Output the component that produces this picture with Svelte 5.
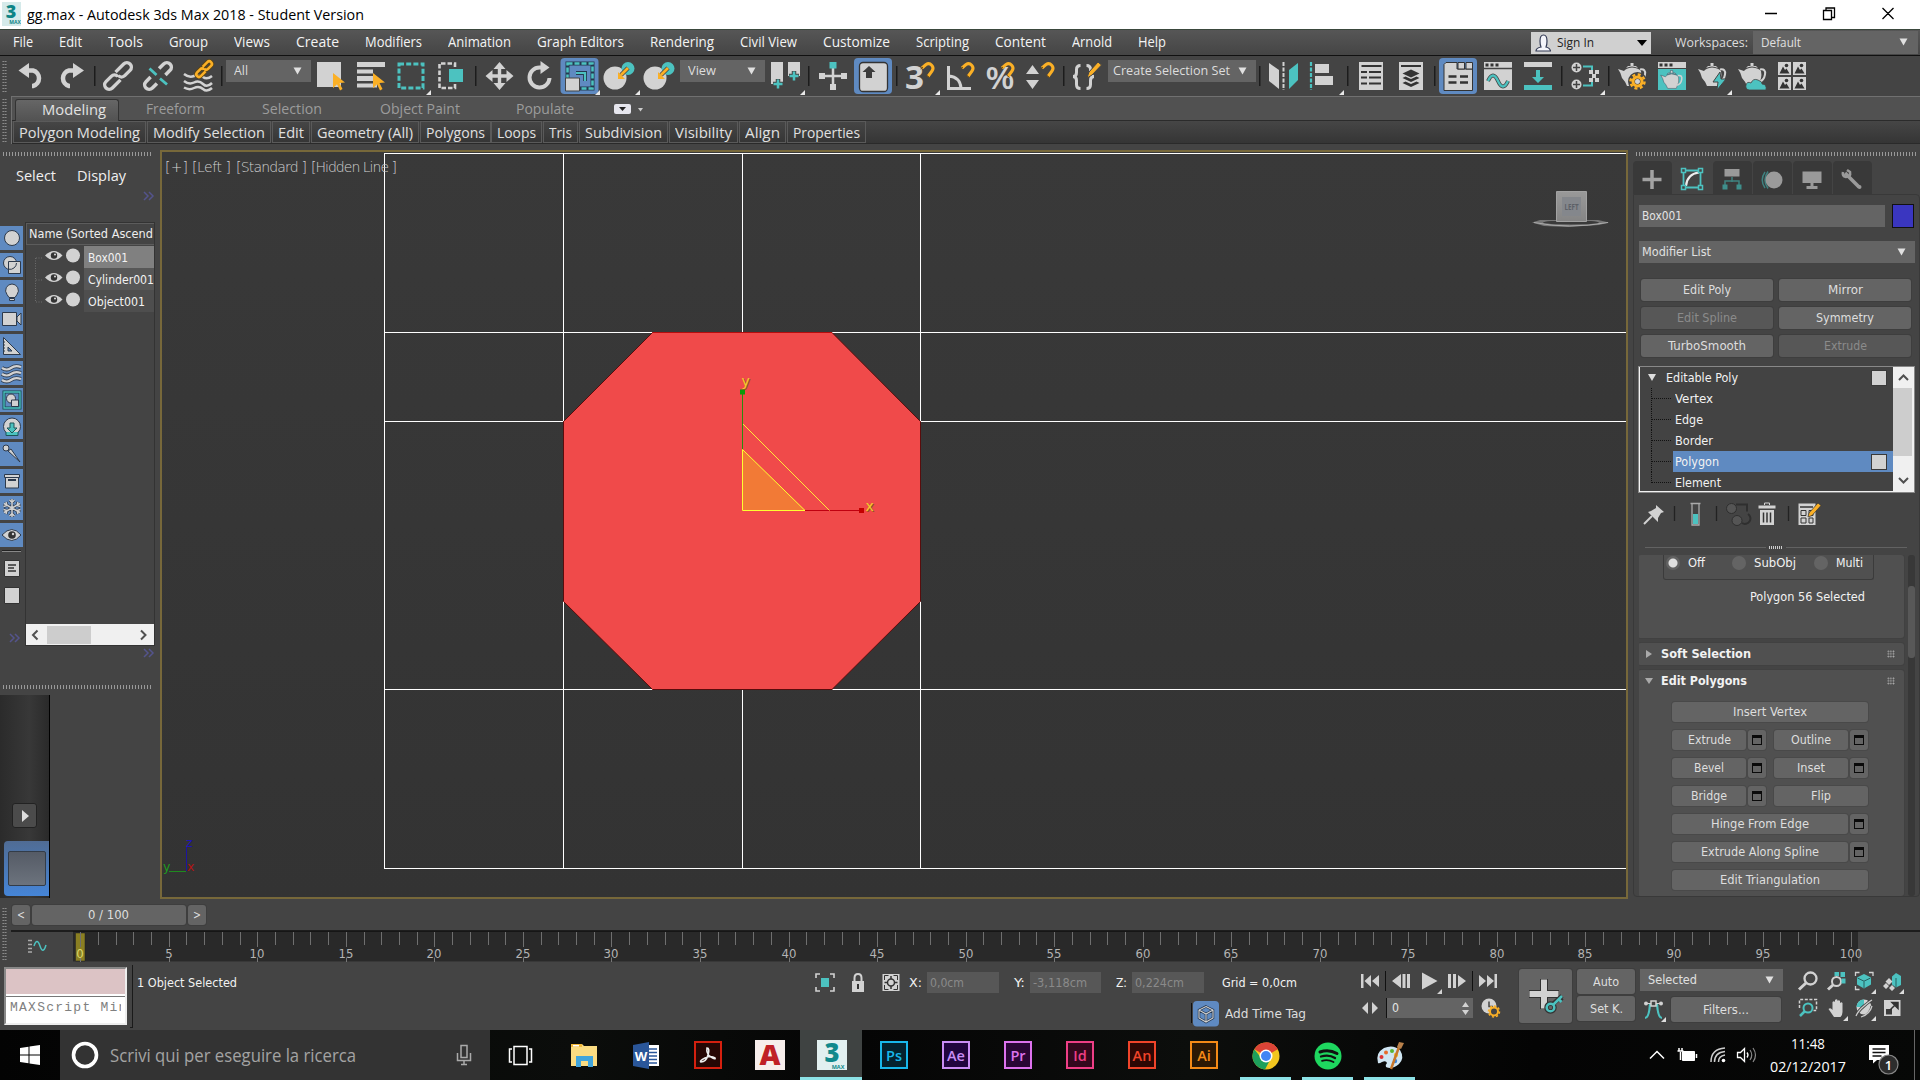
<script>
  // Sizes a label to an exact pixel width by scaling it horizontally.
  function fit(node, w) {
    if (!w) return;
    const natural = node.getBoundingClientRect().width;
    node.style.width = w + 'px';
    node.style.transform = `scaleX(${w / natural})`;
  }

  const L = '#d2d2d2', T = '#4cc2c0', O = '#fbb026';
  const menus = [['File', 20], ['Edit', 23], ['Tools', 35], ['Group', 39], ['Views', 36], ['Create', 43], ['Modifiers', 57], ['Animation', 63], ['Graph Editors', 87], ['Rendering', 64], ['Civil View', 57], ['Customize', 67], ['Scripting', 53], ['Content', 51], ['Arnold', 40], ['Help', 28]];
  const ribbon = [['Polygon Modeling', 121], ['Modify Selection', 112], ['Edit', 26], ['Geometry (All)', 96], ['Polygons', 59], ['Loops', 39], ['Tris', 23], ['Subdivision', 77], ['Visibility', 57], ['Align', 35], ['Properties', 67]];

  const corner = `<path d="M40 34v5h-5z" fill="#e8e8e8"/>`;
  const chain = (s, w) => `<g fill="none" stroke="${s}" stroke-width="${w}" transform="rotate(-45 20 20)"><path d="M19 24.500H7.500a4.500 4.500 0 0 1 0-9H15a4.500 4.500 0 0 1 4.500 4.500M21 15.500h11.500a4.500 4.500 0 0 1 0 9H25a4.500 4.500 0 0 1-4.500-4.500"/></g>`;
  const magnet = `<path d="M22 12l4-3.500a4.500 4.500 0 0 1 6 6.500l-4 5.500" fill="none" stroke="${O}" stroke-width="3"/><path d="M20.500 13l2.500-2M26.500 19l3 2.500" stroke="#6b4a12" stroke-width="1"/>`;
  const pot = (c = L) => `<path d="M6 13l6 2q2-3 8-3.500q7 .5 9 3.500q1.500 7-3 15H15q-2-5-5-8q-1-5-4-9z" fill="${c}"/><path d="M14 12q6-3 12 0l-2-2h-2.500V7h-3v3H16z" fill="${c}"/><path d="M28 13.500q6-1 5 5t-6 7.500" fill="none" stroke="${c}" stroke-width="2"/>`;
  const cursor = `<path d="M22 17l12 9.500-5.500.5 3 6-2.500 1.500-3-6.200-4 4z" fill="${O}"/>`;
  const plusT = (x, y) => `<path d="M${x - 5} ${y}h10M${x} ${y - 5}v10" stroke="#444" stroke-width="4.500"/><path d="M${x - 4.5} ${y}h9M${x} ${y - 4.5}v9" stroke="${T}" stroke-width="2.500"/>`;
  const place = `<circle cx="15" cy="22" r="11.500" fill="${L}"/><circle cx="28" cy="12.500" r="6.500" fill="${T}"/><path d="M28 12l-7 7" stroke="#444" stroke-width="4.500"/><path d="M28 12l-7 7" stroke="${O}" stroke-width="2.800"/><path d="M18 16v7h7z" fill="${O}"/>`;
  const photo = (x, y) => `<path d="M${x} ${y}h13v13h-13z" fill="${L}"/><path d="M${x + 1.5} ${y + 11.5}l3.500-7 2 3.500 1.500-1.500 3 5z" fill="#333"/><circle cx="${x + 8.5}" cy="${y + 3.5}" r="1.800" fill="#333"/>`;

  const tb = {
    undo: `<path d="M15.500 14.500H22a8 8 0 0 1 0 15.500h-1" fill="none" stroke="${L}" stroke-width="4.500"/><path d="M7.500 14.500L18 7v15z" fill="${L}"/>`,
    redo: `<path d="M24.500 14.500H18a8 8 0 0 0 0 15.500h1" fill="none" stroke="${L}" stroke-width="4.500"/><path d="M33 14.500L22 7v15z" fill="${L}"/>`,
    link: chain(L, 3.4),
    unlink: `<g fill="none" stroke="${L}" stroke-width="3.500" transform="rotate(-45 20 20)"><path d="M14 15.500H7.500a4.500 4.500 0 0 0 0 9H14M26 15.500h6.500a4.500 4.500 0 0 1 0 9H26"/></g><path d="M11.500 12.500l7 6.500M22 22.500l7 6" stroke="${T}" stroke-width="2.800"/>`,
    bind: `<g fill="none" stroke="${L}" stroke-width="2.500"><path d="M6 18q5 4 10 2t9 1 9-1M6 25q5 4 10 1.500t9 1.500 9-1M6 31.500q5 3 10 .5t9 1 9-1"/></g><g transform="translate(14.500 1.500) scale(.58)">${chain('#5a4416', 7.500)}${chain(O, 4.500)}</g>`,
    select: `<path d="M6 6h24v25H6z" fill="${L}"/>${cursor}`,
    byname: `<path d="M6 6h28v5H6zM6 13.500h16v4H6zM6 20h16v5H6zM6 27.500h20v4H6z" fill="${L}"/>${cursor}`,
    region: `<rect x="8" y="8" width="24" height="24" fill="none" stroke="${T}" stroke-width="3" stroke-dasharray="5 2.200"/>${corner}`,
    cross: `<path d="M24 11V7.500H8.500v24.500H24v-4" fill="none" stroke="${L}" stroke-width="2.600" stroke-dasharray="4.500 2"/><path d="M18 13h14v13H18z" fill="${T}"/>`,
    move: `<path d="M19.500 6l6 7h-4.300v5.300h5.300V14l7 6-7 6v-4.300h-5.300V27h4.300l-6 7-6-7h4.300v-5.300h-5.300V26l-7-6 7-6v4.300h5.300V13h-4.300z" fill="${L}"/>`,
    rotate: `<path d="M29.500 22a10 10 0 1 1-10-10.500h3" fill="none" stroke="${L}" stroke-width="4"/><path d="M20.500 5l9 6.500-9 6.500z" fill="${L}"/>`,
    scale: `<rect x=".5" y="2" width="38" height="36" rx="4" fill="#5f8ac1"/><rect x="7.500" y="7.500" width="25" height="25" fill="none" stroke="#253a50" stroke-width="4"/><rect x="7.500" y="7.500" width="25" height="25" fill="none" stroke="${T}" stroke-width="2.500" stroke-dasharray="5 2"/><path d="M16 17h9v8" fill="none" stroke="#253a50" stroke-width="4"/><path d="M16 17h9v8" fill="none" stroke="${T}" stroke-width="2.200"/><path d="M5.500 22h14v13h-14z" fill="${L}" stroke="#444"/>${corner}`,
    place: place + corner,
    place2: place,
    pivot: `<path d="M6 6h12v22H6zM23 6h12v14H23z" fill="${L}"/>${plusT(13, 28)}${plusT(29, 20)}${corner}`,
    manip: `<path d="M9 20h22M20 12v19" stroke="${L}" stroke-width="2.500"/><path d="M6 17h6v6H6zM28 17h6v6h-6zM17 28h6v6h-6z" fill="${L}"/><path d="M16.500 6h7v6.500h-7z" fill="${T}"/>`,
    keyb: `<rect x="1" y="2" width="38" height="36" rx="4" fill="#5f8ac1"/><rect x="6.500" y="6.500" width="28" height="29" rx="3.500" fill="${L}" stroke="#333" stroke-width="1.300"/><path d="M16 10l6.500 6H19v6h-6v-6H9.500z" fill="#3c3c3c"/>`,
    snap3: `<text x="5" y="33" font-family="Open Sans, sans-serif" font-weight="700" font-size="32" fill="${L}" textLength="19" lengthAdjust="spacingAndGlyphs">3</text>${magnet}${corner}`,
    angle: `<path d="M8.500 10v22.500H31M9 20q11 1 12 12" fill="none" stroke="${L}" stroke-width="3"/>${magnet}`,
    pct: `<text x="5.500" y="33" font-family="Open Sans, sans-serif" font-weight="600" font-size="31" fill="${L}" textLength="29" lengthAdjust="spacingAndGlyphs">%</text>${magnet}`,
    spin: `<path d="M12.500 9l6.500 9H6zM12.500 33L6 24h13z" fill="${L}"/>${magnet}`,
    named: `<g fill="none" stroke="${L}" stroke-width="3"><path d="M13.500 9.500q-4 0-4 4v3q0 4-3.500 4 3.500 0 3.500 4v4q0 4 4 4M19.500 9.500q4 0 4 4v3q0 4 3.500 4-3.500 0-3.500 4v4q0 4-4 4"/></g><path d="M20 22l2-6 9-10 3.500 3-9.500 10z" fill="${O}" stroke="#444"/>`,
    mirror: `<path d="M5 7l10 7v19L5 25z" fill="${L}"/><path d="M19.500 6v28" stroke="${L}" stroke-width="2" stroke-dasharray="4 1.500"/><path d="M25 14l9-7v17l-9 9z" fill="${T}"/>`,
    align: `<path d="M7 6v28" stroke="${T}" stroke-width="2.200" stroke-dasharray="4 1.500"/><path d="M11 8h14v9H11zM11 20h18v9H11z" fill="${L}"/>${corner}`,
    list: `<path d="M8 6h24v28H8z" fill="${L}"/><path d="M10.500 10h20M10 16h6M18 16h12M10 21.500h6M18 21.500h12M10 27.500h6M18 27.500h12" stroke="#333" stroke-width="2.200"/>`,
    layers: `<path d="M8 6h24v28H8z" fill="${L}"/><path d="M10 10h20" stroke="#333" stroke-width="2"/><path d="M20 13.500l8.500 4-8.500 4-8.500-4zM11.500 22l3-1.500 5.500 2.500 5.500-2.500 3 1.500-8.500 4zM11.500 27l3-1.500 5.500 2.500 5.500-2.500 3 1.500-8.500 4z" fill="#333"/>`,
    toggle: `<rect x="1" y="2" width="38" height="36" rx="4" fill="#5f8ac1"/><path d="M8 6.500h11v6.500h15.500v21.500H6v-26z" fill="${L}" stroke="#333"/><path d="M20 6.500h6.500V13H20zM28 6.500h6.500V13H28z" fill="${L}" stroke="#333"/><path d="M10.500 20.500h8M22 20.500h8M10.500 26.500h8M22 26.500h8" stroke="#333" stroke-width="2.500"/>`,
    curve: `<path d="M6 6h28v28H6z" fill="${L}"/><path d="M7.500 7.500h3v3h-3zM12.500 7.500h3v3h-3zM17.500 7.500h3v3h-3z" fill="#333"/><path d="M6 12.500h28" stroke="#444" stroke-width="1.500"/><path d="M10 25q5-11 10 0t10 0" fill="none" stroke="#444" stroke-width="4"/><path d="M10 25q5-11 10 0t10 0" fill="none" stroke="${T}" stroke-width="2.300"/>`,
    dope: `<path d="M6 6h28v5H6z" fill="${L}"/><path d="M6 29h28v5H6zM18 14h4v7h4l-6 6-6-6h4z" fill="${T}"/>`,
    schem: `<circle cx="11.500" cy="11.500" r="5" fill="${L}"/><circle cx="11.500" cy="28.500" r="5" fill="${L}"/><path d="M11.500 8v7M8 11.500h7M11.500 25v7M8 28.500h7" stroke="#444" stroke-width="1.500"/><path d="M18 10.500h9V15M18 29.500h9V25" fill="none" stroke="${T}" stroke-width="2"/><path d="M24 14h4v4h-4zM30 14h4v4h-4zM27 18h4v4h-4zM24 22h4v4h-4zM30 22h4v4h-4z" fill="${L}"/>${corner}`,
    potGear: `${pot()}<circle cx="25.500" cy="25.500" r="6" fill="none" stroke="#444" stroke-width="7"/><circle cx="25.500" cy="25.500" r="4.500" fill="none" stroke="${O}" stroke-width="3"/><circle cx="25.500" cy="25.500" r="7" fill="none" stroke="${O}" stroke-width="2.500" stroke-dasharray="3 2.500"/>`,
    potWin: `<path d="M6 6h28v6H6z" fill="${L}"/><path d="M7.500 7.500h3v3h-3zM12.500 7.500h3v3h-3zM17.500 7.500h3v3h-3z" fill="#333"/><path d="M6 13h28v21H6z" fill="${T}"/><g transform="translate(4 9) scale(.78)" stroke="#345" stroke-width=".6">${pot()}</g>`,
    potBolt: `${pot()}<path d="M28 16l-7 10h5l-1 8 9-11h-5z" fill="${T}" stroke="#444"/>${corner}`,
    potCloud: `${pot()}<path d="M17 34q-4-1-3-5t5-2q2-5 7-3t4 4q5 0 4 6z" fill="${T}" stroke="#444" stroke-width=".8"/>`,
    gallery: photo(6, 6) + photo(21, 6) + photo(6, 21) + photo(21, 21)
  };

  const toolbar = ['undo', 'redo', 7, 'link', 'unlink', 'bind', 7, { w: 85, t: 'All', tw: 14, m: 1 }, 'select', 'byname', 'region', 'cross', 9, 'move', 'rotate', 'scale', 'place', 'place2', { w: 85, t: 'View', tw: 28, m: 0 }, 'pivot', 8, 'manip', 'keyb', 7, 'snap3', 'angle', 'pct', 'spin', 7, 'named', { w: 148, t: 'Create Selection Set', tw: 117, m: 1, tight: true }, 8, 'mirror', 'align', 7, 'list', 'layers', 7, 'toggle', 'curve', 'dope', 7, 'schem', 7, 'potGear', 'potWin', 'potBolt', 'potCloud', 'gallery'];

  const S = `fill="${L}" stroke="#2d3a4c" stroke-width="1"`;
  const flake = `M12 3v18M4 7.500l16 9M4 16.500l16-9M9.500 4l2.500 2.500L14.500 4M9.500 20l2.500-2.500 2.500 2.500M3.500 10.500l3.500-1-1-3.500M20.500 13.500l-3.500 1 1 3.500M3.500 13.500l3.500 1-1 3.500M20.500 10.500l-3.500-1 1-3.500`;
  const side = [
    `<circle cx="12" cy="12" r="7.500" ${S}/>`,
    `<circle cx="10" cy="10" r="6.500" ${S}/><path d="M8.500 8.500h12v12h-12z" fill="${L}" stroke="#2d3a4c"/><path d="M16.500 10a6.500 6.500 0 0 1-8 6.200" fill="none" stroke="#2d3a4c"/>`,
    `<path d="M12 4a6.500 6.500 0 0 1 5 10.500l-2 3H9l-2-3A6.500 6.500 0 0 1 12 4zM9.500 18.500h5v2h-5z" ${S}/>`,
    `<path d="M2.500 5.500h14v13h-14zM17 10l4-4v12l-4-4z" ${S}/>`,
    `<path d="M3.500 3.500l17 17h-17z" ${S}/><path d="M8 13l4 4H8z" fill="#5f8ac1" stroke="#2d3a4c"/><path d="M3 8h2M3 11h2M3 14h2M3 17h2" stroke="#2d3a4c"/>`,
    `<g fill="none" stroke="#2d3a4c" stroke-width="4"><path d="M2 7q5 3 9 0t10-1M2 13q5 3 9 0t10-1M2 19q5 3 9 0t10-1"/></g><g fill="none" stroke="${L}" stroke-width="2.200"><path d="M2 7q5 3 9 0t10-1M2 13q5 3 9 0t10-1M2 19q5 3 9 0t10-1"/></g>`,
    `<path d="M4 4h16v16H4z" fill="#5f8ac1" stroke="#174a50" stroke-width="3"/><path d="M4 4h16v16H4z" fill="none" stroke="${T}" stroke-width="1.300"/><circle cx="11" cy="10.500" r="4.500" ${S}/><path d="M11.500 12h7v6.500h-7z" ${S}/>`,
    `<circle cx="12" cy="11.500" r="8.500" ${S}/><path d="M10 8h4v5h3l-5 5-5-5h3zM6 17v3.500h12V17" fill="${T}" stroke="#1c5558"/>`,
    `<circle cx="6" cy="6" r="3" ${S}/><path d="M8 9l3-2 9 13z" ${S}/>`,
    `<path d="M4.500 5.500h15v3h-15zM5.500 8.500h13v10.500h-13z" ${S}/><path d="M8 11h8" stroke="#2d3a4c" stroke-width="2"/>`,
    `<path d="${flake}" fill="none" stroke="#2d3a4c" stroke-width="3"/><path d="${flake}" fill="none" stroke="${L}" stroke-width="1.500"/>`,
    `<path d="M2 12q10-11 19 0-9 11-19 0z" ${S}/><circle cx="12" cy="12" r="3.800" fill="#333"/><circle cx="13" cy="11" r="1.200" fill="${L}"/>`
  ];

  const cmdTabs = [
    `<path d="M20 9v19M10.500 18.500h19" stroke="#a3a3a3" stroke-width="3.500"/>`,
    `<path d="M11.500 9.500h17v17h-17z" fill="none" stroke="${T}" stroke-width="1.800"/><path d="M14 25q1-12 13-13.500" fill="none" stroke="#eee" stroke-width="2.200"/><g fill="#444" stroke="${T}" stroke-width="1.500"><path d="M9.500 7.500h4v4h-4zM26.500 7.500h4v4h-4zM9.500 24.500h4v4h-4zM26.500 24.500h4v4h-4z"/></g>`,
    `<path d="M12.500 8h15v7.500h-15z" fill="#9a9a9a"/><path d="M20 16v5M13 24v-4h14v4" fill="none" stroke="#3f8280" stroke-width="1.500"/><path d="M10.500 23.500h5v5h-5zM24.500 23.500h5v5h-5z" fill="#3f8f8c"/>`,
    `<g fill="none" stroke="#3f8280" stroke-width="1.500"><path d="M13 11q-5.500 8 0 16M16 10.500q-6 8.500 0 17"/></g><circle cx="22" cy="19" r="8.500" fill="#9a9a9a"/>`,
    `<path d="M10.500 10.500h19v11.500h-19zM18.500 22h3v3h-3zM14.500 25h11v3h-11z" fill="#9a9a9a"/>`,
    `<path d="M13 12l14 14" stroke="#9a9a9a" stroke-width="3.500"/><path d="M11 11q-1 4 3 5 5 0 4-5l-3-2" fill="none" stroke="#9a9a9a" stroke-width="2.600"/><circle cx="27.500" cy="26" r="2" fill="#9a9a9a"/>`
  ];

  const modButtons = [['Edit Poly', 48], ['Mirror', 35], ['Edit Spline', 60, 1], ['Symmetry', 58], ['TurboSmooth', 78], ['Extrude', 43, 1]];
  const stack = [['Vertex', 38], ['Edge', 28], ['Border', 38], ['Polygon', 44], ['Element', 46]];
  // Each row lists [label, label width, span class, has settings box]
  const polyRows = [
    [['Insert Vertex', 74, 'b196']],
    [['Extrude', 43, 'b74', 1], ['Outline', 40, 'b74', 1]],
    [['Bevel', 30, 'b74', 1], ['Inset', 28, 'b74', 1]],
    [['Bridge', 36, 'b74', 1], ['Flip', 20, 'b94']],
    [['Hinge From Edge', 98, 'b176', 1]],
    [['Extrude Along Spline', 118, 'b176', 1]],
    [['Edit Triangulation', 100, 'b196']]
  ];

  const frames = Array.from({ length: 101 }, (_, i) => ({ i, x: Math.round(80.2 + i * 17.709) + 0.5 }));

  const adobe = (t, c, bg) => `<path d="M1 1h26v26H1z" fill="${bg}" stroke="${c}" stroke-width="2"/><text x="14" y="19.500" text-anchor="middle" font-family="Open Sans, sans-serif" font-weight="600" font-size="14.500" fill="${c}">${t}</text>`;
  const apps = [
    { s: `<g fill="none" stroke="#fff" stroke-width="1.500"><path d="M6 5.500h13v18H6z"/><path d="M4 8H1.500v13H4M21 8h2.500v13H21"/></g>` },
    { s: `<path d="M1 3h11l2 2h13v20H1z" fill="#fbdc82"/><path d="M1 3h11v3H1z" fill="#f2b93b"/><path d="M3 4h6v1.500H3z" fill="#fff"/><path d="M6 26V15h17v11h-5v-6h-7v6z" fill="#41a5dc"/>` },
    { s: `<path d="M14 4h13v21H14z" fill="#fff"/><path d="M17 8h8M17 11.500h8M17 15h8M17 18.500h8M17 22h8" stroke="#2a579a" stroke-width="1.500"/><path d="M1 4l16-3v27L1 25z" fill="#2a5699"/><text x="9" y="19.500" text-anchor="middle" font-family="Open Sans, sans-serif" font-weight="700" font-size="13" fill="#fff">W</text>` },
    { s: `<path d="M1 1h26v26H1z" fill="#260704" stroke="#d5200f" stroke-width="2"/><path d="M13 7q3 0 1 7t-7 7q-2-1 4-4t10 0q1 2-4-1t-4-9z" fill="none" stroke="#eee" stroke-width="1.600"/>` },
    { s: `<path d="M-1-1h30v30H-1z" fill="#f7eeec"/><text x="14" y="24" text-anchor="middle" font-family="Open Sans, sans-serif" font-weight="800" font-size="28" fill="#c02026" textLength="21" lengthAdjust="spacingAndGlyphs">A</text>` },
    { s: `<path d="M-1-1h30v30H-1z" fill="#e2f0f0"/><text x="14" y="21" text-anchor="middle" font-family="Open Sans, sans-serif" font-weight="800" font-size="27" fill="#11898c" textLength="15" lengthAdjust="spacingAndGlyphs">3</text><text x="20" y="27.500" text-anchor="middle" font-family="Open Sans, sans-serif" font-weight="700" font-size="5.500" fill="#11898c">MAX</text>`, on: 'active' },
    { s: adobe('Ps', '#18b7ea', '#04222e') },
    { s: adobe('Ae', '#c98df5', '#20053f') },
    { s: adobe('Pr', '#dd72ee', '#2a0636') },
    { s: adobe('Id', '#ee3f86', '#33081d') },
    { s: adobe('An', '#f0442a', '#2e0704') },
    { s: adobe('Ai', '#f58a17', '#2c1804') },
    { s: `<circle cx="14" cy="15" r="13.500" fill="#f2c61f"/><path d="M14 15L2.300 8.200A13.500 13.500 0 0 1 25.700 8.300z" fill="#db4437"/><path d="M14 1.500a13.500 13.500 0 0 1 11.700 6.800H14z" fill="#db4437"/><path d="M2.300 8.200A13.500 13.500 0 0 0 13 28.500l5-9.500-8-1z" fill="#1da05c"/><circle cx="14" cy="15" r="6.500" fill="#fff"/><circle cx="14" cy="15" r="5" fill="#4285f4"/>`, on: 'run' },
    { s: `<circle cx="14" cy="15" r="13.500" fill="#1ed75f"/><g fill="none" stroke="#111" stroke-linecap="round"><path d="M6 11q9-3 17 1.500" stroke-width="3"/><path d="M7 15.500q8-2.500 14 1.500" stroke-width="2.300"/><path d="M8 19.800q6-1.800 11.500 1.200" stroke-width="1.800"/></g>`, on: 'run' },
    { s: `<path d="M2 22Q-1 12 8 7q9-4 16 2 5 8-1 14-7 6-13 3-1-2 1-4-1-3-5-1-3 2-4 1z" fill="#cfe5f2"/><circle cx="5.500" cy="16" r="2" fill="#d33"/><circle cx="10" cy="11.500" r="2" fill="#e66b2c"/><circle cx="16" cy="10" r="2" fill="#58b530"/><circle cx="20" cy="14" r="2.200" fill="#f3c32b"/><circle cx="19" cy="20" r="2.200" fill="#3b84d8"/><path d="M15 28l8-22" stroke="#c7772b" stroke-width="2.500"/><path d="M21 6l2-5 5 1-3 6z" fill="#b9814b"/>`, on: 'run' }
  ];
</script>

{#snippet t(text, w, cls = '')}<span class="t {cls}" use:fit={w}>{text}</span>{/snippet}
{#snippet more()}<svg class="more" width="12" height="10"><path d="M1 1l4 4-4 4M6 1l4 4-4 4" fill="none" stroke="#54548c" stroke-width="1.500" /></svg>{/snippet}
{#snippet tri()}<svg class="tri" width="9" height="8"><path d="M.5 .5h8L4.500 7.500z" fill="#e0e0e0" /></svg>{/snippet}

<div class="app">
  <header class="title">
    <svg width="19" height="24" viewBox="0 0 19 24"><path d="M0 0h19v24H0z" fill="#d5eaea" /><text x="9" y="16" text-anchor="middle" font-family="Open Sans, sans-serif" font-weight="800" font-size="18" fill="#0d8486">3</text><text x="13" y="22" text-anchor="middle" font-family="Open Sans, sans-serif" font-weight="700" font-size="5" fill="#0d8486">MAX</text></svg>
    {@render t('gg.max - Autodesk 3ds Max 2018 - Student Version', 337)}
    <svg class="wc" width="130" height="14"><path d="M0 6.500h12M58.500 3.500h8v9h-8zM61 3V1h8.500v9.500H67M117.500 1l11 11M128.500 1l-11 11" fill="none" stroke="#000" stroke-width="1.300" /></svg>
  </header>

  <nav class="menu">
    <div class="items">{#each menus as [m, w]}{@render t(m, w)}{/each}</div>
    <div class="signin">
      <svg width="16" height="20"><path d="M1 18q0-3 5-4-1-2-1-6 0-6 3.500-6T12 8q0 4-1 6 4 1 4.500 4z" fill="#f4f4fa" stroke="#333a55" stroke-width="1.200" /></svg>
      {@render t('Sign In', 37)}
      <svg class="end" width="10" height="6"><path d="M0 0h10L5 6z" fill="#000" /></svg>
    </div>
    <span class="ws">{@render t('Workspaces:', 73)}</span>
    <div class="dd wsdd">{@render t('Default', 40)}{@render tri()}</div>
  </nav>

  <div class="toolbar">
    <i class="vgrip"></i>
    {#each toolbar as item}
      {#if typeof item === 'string'}
        <svg width="40" height="40" viewBox="0 0 40 40">{@html tb[item]}</svg>
      {:else if typeof item === 'number'}
        <i class="sep s{item}"></i>
      {:else}
        <div class="dd tdd" class:gap={item.m} class:wide={item.tight}>{@render t(item.t, item.tw)}{@render tri()}</div>
      {/if}
    {/each}
  </div>

  <div class="ribbon">
    <div class="rgrip"><i class="vgrip"></i></div>
    <div class="rbody">
      <div class="tabs">
        <div class="tab on">{@render t('Modeling', 64)}</div>
        <div class="tab f1">{@render t('Freeform', 59)}</div>
        <div class="tab f2">{@render t('Selection', 60)}</div>
        <div class="tab f3">{@render t('Object Paint', 80)}</div>
        <div class="tab f4">{@render t('Populate', 58)}</div>
        <svg class="f5" width="32" height="10"><rect width="17" height="10" rx="2" fill="#e6e6ee" /><path d="M5 3h7L8.500 7z" fill="#222" /><path d="M24 4h5l-2.500 3.500z" fill="#ccc" /></svg>
      </div>
      <div class="panels">{#each ribbon as [r, w]}<div class="cell">{@render t(r, w)}</div>{/each}</div>
    </div>
  </div>

  <main>
    <aside class="left">
      <i class="hgrip"></i>
      <div class="sd">{@render t('Select', 40)}{@render t('Display', 49)}</div>
      <div class="mr">{@render more()}</div>
      <div class="explorer">
        <div class="filters">
          {#each side as s}<svg class="fi" width="23" height="24" viewBox="0 0 23 24">{@html s}</svg>{/each}
          <i class="fsep"></i>
          <svg class="doc" width="23" height="17"><path d="M4.500.5h15v16h-15z" fill="#d2d2d2" stroke="#333" /><path d="M8 5h8M8 8h6M8 11h8" stroke="#333" stroke-width="1.300" /></svg>
          <svg class="doc2" width="23" height="17"><path d="M4.500.5h15v16h-15z" fill="#d2d2d2" stroke="#333" /></svg>
          <div class="mr2">{@render more()}</div>
        </div>
        <div class="tree">
          <div class="thead">{@render t('Name (Sorted Ascend', 124)}</div>
          {#each [['Box001', 40, 'r1'], ['Cylinder001', 66, 'r2'], ['Object001', 57, 'r3']] as [n, w, c]}
            <div class="trow">
              <svg width="58" height="22"><path d="M9.500 {c === 'r1' ? 12 : 0}V{c === 'r3' ? 12 : 22}M10 12h7" stroke="#6c6c6c" stroke-dasharray="1 1.500" fill="none" /><path d="M19 9.500q9-9 17.500 0-8.500 9-17.500 0z" fill="#d2d2d2" /><circle cx="28" cy="9.500" r="3.200" fill="#333" /><circle cx="29" cy="8.500" r="1" fill="#ddd" /><circle cx="47" cy="9.500" r="7" fill="#d2d2d2" /></svg>
              <div class="nm {c}">{@render t(n, w)}</div>
            </div>
          {/each}
          <div class="fill"></div>
          <div class="hs"><svg width="21" height="19"><path d="M11.500 5.500L7 10l4.500 4.500" fill="none" stroke="#505050" stroke-width="2" /></svg><i></i><svg class="end" width="21" height="19"><path d="M8 5.500l4.500 4.500L8 14.500" fill="none" stroke="#505050" stroke-width="2" /></svg></div>
        </div>
      </div>
      <div class="mr3">{@render more()}</div>
      <i class="hgrip low"></i>
      <div class="dark">
        <div class="play"><svg width="8" height="12"><path d="M1 0l7 6-7 6z" fill="#ddd" /></svg></div>
        <div class="blue"><i></i></div>
      </div>
    </aside>

    <section class="view">
      <svg width="1468" height="749" viewBox="160 150 1468 749">
        <defs>
          <linearGradient id="vp" x1="0" x2="0" y1="0" y2="1"><stop offset="0" stop-color="#393939" /><stop offset="1" stop-color="#333" /></linearGradient>
          <linearGradient id="cube" x1="0" x2="0" y1="0" y2="1"><stop offset="0" stop-color="#999" /><stop offset="1" stop-color="#858585" /></linearGradient>
        </defs>
        <rect x="161" y="151" width="1466" height="747" fill="url(#vp)" stroke="#77683a" stroke-width="2" />
        <g shape-rendering="crispEdges" stroke="#fff" fill="none">
          <path d="M1626 153.500H384.500V868.500H1626M384 332.500H1626M384 421.500H563M920 421.500H1626M384 689.500H1626" />
          <path d="M563.500 153V421M563.500 601V868M920.500 153V421M920.500 601V868M742.500 153V332M742.500 690V868" />
        </g>
        <path d="M652.500 332.500H832L920.500 421.500V601.500L832 689.500H652.500L563.500 601.500V421.500z" fill="#f04a4a" stroke="#5a0c0c" />
        <path d="M652.500 332.500H832" stroke="#b50d0d" />
        <path d="M742.500 392V510" stroke="#2a8a10" /><path d="M742.500 510.500H861" stroke="#c00010" />
        <path d="M740 389.500h5v5h-5z" fill="#0a9a0a" /><path d="M859 508h5v5h-5z" fill="#c40000" />
        <path d="M742.500 449.500V510.500H805z" fill="#f27a36" stroke="#ffff30" /><path d="M743 424l86.500 86.500" stroke="#ffe83a" />
        <g class="vx" font-size="14"><text x="742.500" y="387" fill="#8a5a18">y</text><text x="866.500" y="512" fill="#8a5a18">x</text><text x="741.500" y="386" fill="#f0cc30">y</text><text x="865.500" y="511" fill="#f0cc30">x</text></g>
        <g shape-rendering="crispEdges"><path d="M186.500 847V871" stroke="#1c14a0" /><path d="M169 871.500H186" stroke="#1f8a1f" /></g>
        <g class="vx" font-size="12.500"><text x="186" y="847" fill="#1e14b8">z</text><text x="163" y="871" fill="#1f9a1f">y</text><text x="187" y="871" fill="#b01414">x</text></g>
        <g class="vt" font-size="14" fill="#d2d2d2">
          <text x="165" y="172" textLength="23">[+]</text><text x="192" y="172" textLength="39">[Left ]</text><text x="236" y="172" textLength="71">[Standard ]</text><text x="311" y="172" textLength="86">[Hidden Line ]</text>
        </g>
        <path d="M1532 222.500l8-2.500h58l11 2.500-10 2.500-31 2-24-1z" fill="#777" /><path d="M1534 222.500q34 7 74 0" fill="none" stroke="#aaa" /><ellipse cx="1571" cy="222.500" rx="28" ry="2" fill="#3a3a3a" />
        <path d="M1556.500 191.500h30v30h-30z" fill="url(#cube)" stroke="#a2a2a2" /><path d="M1562 197h19v19h-19z" fill="#84878c" />
        <text x="1564.500" y="209.500" font-family="Open Sans, sans-serif" font-weight="700" font-size="8" fill="#5c6067" textLength="14" lengthAdjust="spacingAndGlyphs">LEFT</text>
      </svg>
    </section>

    <aside class="right">
      <i class="hgrip"></i>
      <div class="ctabs">{#each cmdTabs as c, i}<div class="ct" class:on={i === 1}><svg width="40" height="34" viewBox="0 0 40 34">{@html c}</svg></div>{/each}</div>
      <div class="cbody">
        <div class="nrow"><div class="field">{@render t('Box001', 40)}</div><i class="sw"></i></div>
        <div class="dd mlist">{@render t('Modifier List', 69)}{@render tri()}</div>
        <div class="mods">{#each modButtons as [b, w, off]}<div class="btn" class:off>{@render t(b, w)}</div>{/each}</div>
        <div class="stack">
          <div class="rows">
            <div class="sr root"><svg width="8" height="7"><path d="M0 0h8L4 7z" fill="#ddd" /></svg>{@render t('Editable Poly', 72)}<i class="cb"></i></div>
            {#each stack as [n, w], i}
              <div class="sr"><svg width="33" height="21"><path d="M11.500 0V{i === 4 ? 11 : 21}M12 10.500h19" stroke="#111" stroke-dasharray="1 1" fill="none" /></svg><div class="sn" class:sel={i === 3}>{@render t(n, w)}{#if i === 3}<i class="cb"></i>{/if}</div></div>
            {/each}
          </div>
          <div class="vs"><svg width="21" height="21"><path d="M6 13l4.500-4.500L15 13" fill="none" stroke="#505050" stroke-width="2" /></svg><i></i><svg class="bot" width="21" height="21"><path d="M6 8l4.500 4.500L15 8" fill="none" stroke="#505050" stroke-width="2" /></svg></div>
        </div>
        <svg class="sicons" width="276" height="42" viewBox="1639 492 276 42">
          <path d="M1644 523l8-8" stroke="#d2d2d2" stroke-width="2" /><path d="M1648 511l3-1 5-3v-3l8 7-3 1-3 5v4z" fill="#d2d2d2" />
          <path d="M1674.500 505v15M1716.500 505v15M1788.500 505v15" stroke="#222" stroke-width="1.300" />
          <path d="M1690.500 502.500h10M1692 503v21h7v-21" fill="none" stroke="#aaa" stroke-width="1.300" /><path d="M1693 513h5v10h-5z" fill="#4cc2c0" />
          <g fill="#555" stroke="#2f2f2f"><circle cx="1731.500" cy="507.500" r="5" /><circle cx="1737" cy="519.500" r="5" /><path d="M1736 503.500h11v7M1748 513a5 5 0 1 1-6 9" fill="none" stroke-width="2" /></g>
          <path d="M1758.500 504.500h17v3h-17zM1760 509h14v15h-14z" fill="#d2d2d2" /><path d="M1764.500 504v-2h5v2" stroke="#d2d2d2" fill="none" /><path d="M1763.500 511.500v10M1767 511.500v10M1770.500 511.500v10" stroke="#333" stroke-width="1.500" />
          <path d="M1798.500 502.500h17v21.500h-17z" fill="#d2d2d2" /><path d="M1800 506h13" stroke="#333" stroke-width="1.500" /><path d="M1801 509.500h5v5h-5zM1809 509.500h4v5h-4zM1801 517h5v5h-5zM1809 517h4v5h-4z" fill="none" stroke="#333" /><path d="M1808 516l1-4 9-10 3 2.500-9 10z" fill="#fbb026" stroke="#333" stroke-width=".7" />
        </svg>
        <div class="split"><i></i><b></b><i></i></div>
        <div class="scroll">
          <div class="rolls">
            <div class="roll first">
              <div class="radios"><span class="rd on"></span>{@render t('Off', 17)}<span class="rd g1"></span>{@render t('SubObj', 42)}<span class="rd g2"></span>{@render t('Multi', 27)}</div>
              <div class="ps">{@render t('Polygon 56 Selected', 115)}</div>
            </div>
            <div class="roll head"><svg width="8" height="8"><path d="M1 0l6 4-6 4z" fill="#aaa" /></svg>{@render t('Soft Selection', 90)}<i class="dots"></i></div>
            <div class="roll big">
              <div class="head"><svg width="8" height="8"><path d="M0 1h8L4 7z" fill="#aaa" /></svg>{@render t('Edit Polygons', 86)}<i class="dots"></i></div>
              {#each polyRows as row}
                <div class="pr">{#each row as [n, w, c, box]}<div class="pg"><div class="btn {c}">{@render t(n, w)}</div>{#if box}<div class="btn bx"><i></i></div>{/if}</div>{/each}</div>
              {/each}
            </div>
          </div>
          <div class="sbar"><i></i></div>
        </div>
      </div>
    </aside>
  </main>

  <section class="time">
    <i class="vgrip"></i>
    <div class="tl">
      <div class="slider"><div class="btn ar">{@render t('<', 8)}</div><div class="btn sl">{@render t('0 / 100', 41)}</div><div class="btn ar">{@render t('>', 8)}</div></div>
      <svg width="1909" height="34" viewBox="11 930 1909 34">
        <path d="M73 931H1858V961H73z" fill="#292929" /><path d="M11 931h1909" stroke="#111" stroke-width="1.600" /><path d="M73 961.500H1858" stroke="#383838" />
        <path d="M75.500 933h9.500v28h-9.500z" fill="#8a7f22" stroke="#222" stroke-width=".5" />
        {#each frames as f}
          <path d="M{f.x} 932V{f.i % 5 ? 945 : 947}" stroke="#6f6f6f" />
          {#if f.i % 5 === 0}<path d="M{f.x} 957.500V962" stroke="#777" /><text x={f.x - 0.5} y="958" text-anchor="middle" class="tk" fill={f.i ? '#b4b4b4' : '#ddd86a'}>{f.i}</text>{/if}
        {/each}
        <path d="M28 940.500h4M28 944.500h4M28 948.500h4M28 952h4" stroke="#aaa" stroke-width="1.300" /><path d="M34 946q3-9 6 0t6-1" fill="none" stroke="#4cc2c0" stroke-width="1.500" />
      </svg>
    </div>
  </section>

  <section class="status">
    <div class="listener"><i></i><div>MAXScript Min</div></div>
    <i class="lsep"></i>
    <div class="sel1">{@render t('1 Object Selected', 100)}</div>
    <div class="coords">
      <div class="crow">
        <svg width="86" height="21" viewBox="815 972 86 21"><path d="M816 978v-4h4M830 974h4v4M834 987v4h-4M820 991h-4v-4" fill="none" stroke="#d2d2d2" stroke-width="1.600" /><path d="M821 978h8v9h-8z" fill="#4cc2c0" /><path d="M852 981h12v11h-12z" fill="#d2d2d2" /><path d="M854.500 981v-3q0-4 3.500-4t3.500 4v3" fill="none" stroke="#d2d2d2" stroke-width="2" /><path d="M858 984v5" stroke="#333" stroke-width="2" /><path d="M882.500 974h17v17h-17z" fill="#d2d2d2" /><g fill="none" stroke="#333"><circle cx="891" cy="982.500" r="3.500" stroke-width="1.500" /><path d="M891 976v3M891 986v3M884.500 982.500h3M894.500 982.500h3" stroke-width="1.500" /><path d="M884.500 980v-4.500h4M893.500 975.500h4v4.500M897.500 985v4.500h-4M888.500 989.500h-4V985" /></g></svg>
        <span class="cl">{@render t('X:', 13)}</span><div class="cf">{@render t('0,0cm', 34)}</div>
        <span class="cl c2">{@render t('Y:', 11)}</span><div class="cf">{@render t('-3,118cm', 54)}</div>
        <span class="cl c2">{@render t('Z:', 11)}</span><div class="cf">{@render t('0,224cm', 49)}</div>
        <span class="grid">{@render t('Grid = 0,0cm', 75)}</span>
      </div>
      <div class="tag"><svg width="28" height="26" viewBox="0 0 28 26"><path d="M.5 2v20" stroke="#111" /><rect x="2" width="26" height="25.500" rx="4" fill="#5f8ac1" /><path d="M15 5.500l7 3.500v8l-7 4-7-4V9zM8 9l7 4 7-4M15 13v8" fill="none" stroke="#22344c" stroke-width="2.500" /><path d="M15 5.500l7 3.500v8l-7 4-7-4V9zM8 9l7 4 7-4M15 13v8" fill="none" stroke="#d2d2d2" stroke-width="1.100" /></svg>{@render t('Add Time Tag', 81)}</div>
    </div>
    <div class="playback">
      <svg width="146" height="24" viewBox="1358 970 146 24"><g fill="#d2d2d2"><path d="M1361 974h2.500v14h-2.500zM1371 975v12l-6.500-6zM1379 975v12l-7-6zM1401 974v14l-9-7zM1402.500 974h3v14h-3zM1407 974h3v14h-3zM1422 972.500l15.500 8.500-15.500 8.500zM1448 974h3v14h-3zM1453 974h3v14h-3zM1458 975v12l8-6zM1479 975v12l7-6zM1487 975v12l7-6zM1494.500 974h2.500v14h-2.500zM1442 989v5h-5z" /></g><path d="M1385.500 971v20M1472.500 971v20" stroke="#111" /></svg>
      <div class="prow"><svg width="28" height="20"><path d="M10 4v12l-6-6zM14 4v12l6-6z" fill="#d2d2d2" /></svg><div class="sp">{@render t('0', 7)}<svg width="8" height="13"><path d="M0 5h7L3.500 0zM0 8h7l-3.500 5z" fill="#d2d2d2" /></svg></div>
        <svg class="clk" width="24" height="22"><circle cx="8" cy="8" r="7.500" fill="#d2d2d2" /><path d="M8 3.500v5h4" fill="none" stroke="#444" stroke-width="1.500" /><circle cx="13" cy="13.500" r="4" fill="#444" stroke="#fbb026" stroke-width="2" /><circle cx="13" cy="13.500" r="5.500" fill="none" stroke="#fbb026" stroke-width="1.500" stroke-dasharray="2.200 2" /></svg></div>
    </div>
    <div class="btn bigkey"><svg width="53" height="54"><path d="M25 10v30M10 25h30" stroke="#333" stroke-width="8" /><path d="M25 10.500v29M10.500 25h29" stroke="#d2d2d2" stroke-width="6" /><circle cx="31.500" cy="38.500" r="4" fill="none" stroke="#333" stroke-width="4.500" /><path d="M34 35l9-8M40 29l3 3" stroke="#333" stroke-width="4.500" /><circle cx="31.500" cy="38.500" r="3.800" fill="none" stroke="#4cc2c0" stroke-width="2.500" /><path d="M34 36l9-9M39.500 30l3 3" stroke="#4cc2c0" stroke-width="2.500" /></svg></div>
    <div class="two"><div class="btn">{@render t('Auto', 26)}</div><div class="btn">{@render t('Set K.', 33)}</div></div>
    <div class="keyf">
      <div class="dd kd">{@render t('Selected', 49)}{@render tri()}</div>
      <div class="kf"><svg width="27" height="25"><g transform="translate(3 1)"><path d="M2 20q4 0 5-14M14 6q1 14 5 14" fill="none" stroke="#4cc2c0" stroke-width="2.200" /><path d="M3 5.500h15" stroke="#d2d2d2" /><circle cx="3" cy="5.500" r="2" fill="#d2d2d2" /><circle cx="18" cy="5.500" r="2" fill="#d2d2d2" /><path d="M8 3h5v5H8z" fill="#444" stroke="#d2d2d2" stroke-width="1.500" /><path d="M23 19v5h-5z" fill="#ddd" /></g></svg><div class="btn">{@render t('Filters...', 46)}</div></div>
    </div>
    <svg class="navi" width="112" height="56" viewBox="1796 968 112 56">
      <g fill="none" stroke="#d2d2d2"><circle cx="1810.500" cy="978.500" r="6" stroke-width="2.300" /><path d="M1806 983l-7 6.500M1833 985l-5 4.500" stroke-width="3" /><circle cx="1836.500" cy="981.500" r="4.500" stroke-width="2" /></g>
      <path d="M1834.500 972h4.500v4h-4.500zM1840.500 972h4.500v5h-4.500zM1841.500 978.500h4v5h-4z" fill="#4cc2c0" />
      <path d="M1855.500 976v-3.500h4M1869 972.500h4v3.500M1855.500 986v3.500h4" fill="none" stroke="#d2d2d2" stroke-width="1.300" /><path d="M1864 974l7 3.500v7l-7 4-7-4v-7z" fill="#4cc2c0" /><path d="M1857.500 978l6.500 3.200 6.500-3.200M1864 981.500v6.500" fill="none" stroke="#275e5e" />
      <path d="M1896 973l5 3v9l-5 2.500-4-3v-8z" fill="#4cc2c0" /><path d="M1896 978v9" stroke="#275e5e" /><path d="M1889 978l3.500 3.500-3.500 3.500-3.500-3.500zM1886 983l3 3-3 3-3-3zM1892 985l3 3-3 3-3-3z" fill="#d2d2d2" />
      <path d="M1876 989v5h-5zM1904 989v5h-5zM1848 1016v5h-5zM1876 1016v5h-5z" fill="#ddd" />
      <path d="M1799.500 1008v-8.500h17v11h-3" fill="none" stroke="#d2d2d2" stroke-width="1.500" stroke-dasharray="3 1.600" /><circle cx="1808" cy="1008" r="4.500" fill="none" stroke="#4cc2c0" stroke-width="2" /><path d="M1805 1011l-5 5" stroke="#4cc2c0" stroke-width="2.500" />
      <path d="M1834 1017l-5.500-8q2-2 4 1v-8q1.500-1.500 2.500 0v5-7q1.500-1.500 2.500 0v7-6q1.500-1.500 2.500 0v7-5q1.500-1.500 2.500 0v9q0 3-2 5z" fill="#d2d2d2" />
      <circle cx="1864" cy="1007" r="7.500" fill="#d2d2d2" /><path d="M1864 1007v-7.500a7.500 7.500 0 0 0-7.500 7.500zM1864 1007h7" fill="#4cc2c0" /><path d="M1856 1016q2-5 8-10t8-6M1861 1018q10-3 11-12" fill="none" stroke="#444" stroke-width="3" /><path d="M1856 1016q2-5 8-10t8-6M1861 1017q9-3 11-11" fill="none" stroke="#ccc" stroke-width="1.300" />
      <path d="M1884 1000h16.500v16H1884z" fill="#d2d2d2" /><path d="M1886 1009h6v5.500h-6z" fill="#3c3c3c" /><path d="M1890 1010l6-6M1892 1002.500h6v6z" fill="#333" stroke="#333" stroke-width="1.500" />
    </svg>
  </section>

  <footer class="task">
    <div class="start"><svg width="20" height="20"><path d="M0 3l8.500-1.200V9.500H0zM9.500 1.600L20 0v9.500H9.500zM0 10.500h8.500v7.700L0 17zM9.500 10.500H20V20L9.500 18.400z" fill="#fff" /></svg></div>
    <div class="search">
      <svg width="28" height="28"><circle cx="14" cy="14" r="11.500" fill="none" stroke="#fff" stroke-width="3.600" /></svg>
      {@render t('Scrivi qui per eseguire la ricerca', 246)}
      <svg class="end" width="16" height="22"><rect x="5" y="1.500" width="6" height="12" fill="none" stroke="#aaa" stroke-width="1.500" /><path d="M1.500 9v7.500h13V9M8 16.500V20M5 20.500h6" fill="none" stroke="#aaa" stroke-width="1.500" /></svg>
    </div>
    <div class="apps">{#each apps as a}<div class="ap {a.on ?? ''}"><svg width="30" height="30" viewBox="-1 -1 30 30">{@html a.s}</svg></div>{/each}</div>
    <svg class="tray" width="112" height="22" viewBox="1648 1044 112 22">
      <path d="M1650 1058.500l7-7 7 7" fill="none" stroke="#fff" stroke-width="1.500" /><path d="M1682.500 1051.500h12v9h-12z" fill="#fff" stroke="#fff" /><path d="M1696.500 1054v4M1679 1048v3M1682 1048v3M1677.500 1051h6M1680.500 1052v8" stroke="#fff" stroke-width="1.500" fill="none" />
      <g fill="none" stroke="#ccc" stroke-width="1.500"><path d="M1711 1062q0-13 14-14M1714.500 1062q0-9.500 10.500-10.500M1718.500 1062q0-6 6.500-7" /></g><circle cx="1723.500" cy="1060.500" r="1.800" fill="#fff" />
      <path d="M1737.500 1052.500h3l4-4v13l-4-4h-3zM1747 1052.500q2 2.500 0 5" fill="none" stroke="#fff" stroke-width="1.300" /><path d="M1750 1050q3.500 5 0 10M1753 1048q5 7 0 14" fill="none" stroke="#888" stroke-width="1.200" />
    </svg>
    <div class="clock">{@render t('11:48', 34)}{@render t('02/12/2017', 76)}</div>
    <svg class="noti" width="34" height="34" viewBox="1867 1043 34 34"><path d="M1869 1045h20v15h-12l-4 3.500v-3.500h-4z" fill="#fff" /><path d="M1872.500 1049h13M1872.500 1052.500h13M1872.500 1056h9" stroke="#111" stroke-width="1.300" /><circle cx="1888.500" cy="1064.500" r="9.500" fill="#2d2d2d" stroke="#888" stroke-width="1.200" /><text x="1888.500" y="1069.500" text-anchor="middle" font-family="Open Sans, sans-serif" font-weight="600" font-size="13" fill="#fff">1</text></svg>
    <i class="desk"></i>
  </footer>
</div>

<style>
  :global(body) { margin: 0; background: #444; overflow: hidden; }
  .app { width: 1920px; height: 1080px; display: flex; flex-direction: column; overflow: hidden; background: #444; color: #e4e4e4; font: 12px/16px "DejaVu Sans Condensed", "DejaVu Sans", sans-serif; }
  .app :global(svg) { display: block; flex: none; }
  .t { display: inline-block; white-space: nowrap; transform-origin: 0 50%; flex: none; }
  i { display: block; flex: none; }
  .end { margin-left: auto; }
  .title { height: 29px; background: #fff; display: flex; align-items: center; padding: 0 0 1px 2px; gap: 6px; color: #000; font: 15px/20px "Open Sans", sans-serif; box-sizing: border-box; flex: none; }
  .wc { margin-left: auto; margin-right: 25px; }
  .menu { height: 27px; box-sizing: border-box; border-bottom: 1px solid #111; border-top: 1px solid #3a473c; background: linear-gradient(#565656, #454545); display: flex; align-items: center; font: 14px/20px "Open Sans", sans-serif; color: #f4f4f4; padding-left: 13px; flex: none; }
  .items { display: flex; gap: 26px; width: 1518px; padding-bottom: 2px; }
  .signin { width: 120px; height: 22px; box-sizing: border-box; padding: 0 4px; background: #d0d0d0; color: #222; display: flex; align-items: center; gap: 6px; font: 12px/16px "Open Sans", sans-serif; }
  .ws { margin-left: 24px; width: 78px; font: 13px/18px "Open Sans", sans-serif; color: #ddd; padding-bottom: 1px; }
  .dd { background: #646464; display: flex; align-items: center; box-sizing: border-box; padding: 0 9px 0 8px; color: #e0e0e0; }
  .dd .tri { margin-left: auto; }
  .wsdd { width: 165px; height: 23px; font-size: 13px; padding-right: 10px; padding-bottom: 1px; }
  .toolbar { height: 40px; display: flex; align-items: center; flex: none; }
  .vgrip { width: 5px; margin-left: 2px; align-self: stretch; background: radial-gradient(circle, #999 .6px, transparent 1px) 0 0 / 2.5px 3px; }
  .toolbar .vgrip { margin: 4px 4px 3px 2px; }
  .sep { height: 20px; width: 7px; background: linear-gradient(90deg, #1c1c1c, #1c1c1c) 50% 0 / 1.5px 100% no-repeat; }
  .s8 { width: 8px; } .s9 { width: 9px; }
  .tdd { width: 85px; height: 22px; align-self: flex-start; margin-top: 4px; font: 12px/16px "Open Sans", sans-serif; color: #ddd; }
  .tdd.gap { margin-left: 1px; }
  .tdd.wide { width: 148px; padding-left: 5px; }
  .ribbon { height: 48px; display: flex; flex: none; }
  .rgrip { width: 11px; padding-top: 2px; box-sizing: border-box; display: flex; }
  .rbody { flex: 1; border-top: 1px solid #707070; border-left: 1px solid #707070; font: 14px/20px "Open Sans", sans-serif; }
  .tabs { height: 23px; background: #515151; border-bottom: 1px solid #2b2b2b; display: flex; align-items: center; color: #9c9c9c; }
  .tab.on { width: 76px; padding-left: 26px; margin-left: 3px; height: 21px; align-self: flex-end; background: linear-gradient(#666, #525252); border: 1px solid #333; border-bottom: 0; border-radius: 3px 3px 0 0; color: #e2e2e2; line-height: 20px; margin-bottom: -1px; }
  .tab { padding-top: 1px; box-sizing: content-box; }
  .tab.on { padding-top: 0; }
  .f1 { margin-left: 27px; } .f2 { margin-left: 57px; } .f3 { margin-left: 58px; } .f4 { margin-left: 56px; } .f5 { margin-left: 40px; }
  .panels { height: 22px; background: linear-gradient(#464646, #353535); border-bottom: 1px solid #2a2a2a; display: flex; padding-left: 1px; gap: .9px; }
  .cell { padding: 0 5px; border: 1px solid #5a5a5a; line-height: 21px; height: 20px; color: #e0e0e0; }
  main { height: 756px; display: flex; flex: none; }
  .left { width: 160px; display: flex; flex-direction: column; }
  .hgrip { height: 4px; margin: 8px 7px 0 2px; background: radial-gradient(circle, #999 .6px, transparent 1px) 0 0 / 3px 2px; }
  .sd { display: flex; gap: 21px; padding-left: 16px; margin-top: 8px; font: 15px/22px "Open Sans", sans-serif; color: #f0f0f0; }
  .mr { margin: 5px 0 0 143px; height: 10px; }
  .explorer { display: flex; margin-top: 20px; height: 424px; }
  .filters { width: 25px; padding-top: 5px; }
  .fi { background: #5f8ac1; margin-bottom: 3px; }
  .fsep { width: 19px; height: 1px; margin-left: 2px; border-top: 1px solid #222; background: #888; }
  .doc { margin-top: 8px; } .doc2 { margin-top: 10px; }
  .mr2 { padding: 29px 0 0 9px; }
  .tree { width: 128px; border: 1px solid #333; height: 422px; margin-top: 1px; display: flex; flex-direction: column; overflow: hidden; }
  .thead { height: 22px; border: 1px solid #5c5c5c; border-right: 0; box-sizing: border-box; padding-left: 2px; line-height: 20px; color: #eee; margin-bottom: 1px; font-size: 12.5px; flex: none; }
  .trow { display: flex; height: 22px; flex: none; }
  .nm { width: 70px; padding-left: 4px; box-sizing: border-box; line-height: 24px; color: #f2f2f2; overflow: hidden; }
  .r1 { background: #808080; } .r2 { background: #575757; } .r3 { background: #4e4e4e; }
  .fill { flex: 1; }
  .hs { height: 21px; background: #f0f0f0; display: flex; align-items: center; flex: none; }
  .hs i { width: 44px; height: 18px; background: #cdcdcd; }
  .mr3 { margin: 3px 0 0 143px; height: 10px; }
  .left > .low { margin-top: 27px; }
  .dark { flex: none; margin-top: 6px; width: 50px; height: 203px; box-sizing: border-box; border-right: 1px solid #000; background: linear-gradient(90deg, #2b2b2b, #383838 60%, #2a2a2a); overflow: hidden; }
  .play { margin: 108px 0 0 12px; width: 23px; height: 23px; border: 1px solid #222; border-radius: 3px; background: #4b4b4b; display: flex; align-items: center; justify-content: center; }
  .blue { margin: 13px 0 0 4px; width: 45px; height: 55px; border-radius: 4px 0 0 4px; background: linear-gradient(#506c94, #4585d8); box-sizing: border-box; padding: 10px 0 0 4px; }
  .blue i { width: 36px; height: 33px; border: 1px solid #333c48; border-radius: 2px; background: linear-gradient(#555b66, #6c737d); }
  .view { width: 1468px; padding-top: 6px; }
  .vt { font-family: "DejaVu Sans", sans-serif; font-weight: 200; }
  .vx { font-family: "DejaVu Sans", sans-serif; }
  .right { width: 292px; display: flex; flex-direction: column; }
  .right > .hgrip { margin: 8px 2px 0 7px; }
  .ctabs { display: flex; margin: 5px 0 0 5px; height: 33px; gap: 1px; }
  .ct { width: 39px; background: #393939; border-radius: 4px 4px 0 0; }
  .ct.on { background: #444; }
  .ct svg { margin-left: -1px; margin-top: -.5px; }
  .cbody { margin-left: 5px; border: 1px solid #393939; border-radius: 0 4px 4px 4px; height: 703px; box-sizing: border-box; padding-left: 5px; }
  .nrow { display: flex; margin-top: 10px; }
  .field { width: 246px; height: 22px; background: #646464; box-sizing: border-box; padding-left: 3px; line-height: 22px; }
  .sw { margin: -1px 0 0 7px; width: 20px; height: 22px; border: 1px solid #111; background: #3a36c0; }
  .mlist { width: 276px; height: 22px; padding-left: 3px; margin-top: 13px; }
  .mods { display: grid; grid-template-columns: 132px 132px; gap: 6px; margin: 16px 0 0 2px; }
  .btn { height: 22px; background: #646464; border-radius: 3px; display: flex; align-items: center; justify-content: center; color: #dedede; box-shadow: 0 0 0 1px #3e3e3e; }
  .mods .btn.off { background: #575757; color: #8b8b8b; }
  .stack { margin-top: 9px; width: 277px; height: 127px; box-sizing: border-box; border: 2px solid #f2f2f2; border-top-width: 1px; outline: 1px solid #888; outline-offset: -1px; display: flex; overflow: hidden; margin-left: -1px; background: #434343; }
  .rows { width: 253px; color: #f2f2f2; }
  .sr { display: flex; height: 21px; align-items: center; }
  .sr.root { padding-left: 8px; gap: 10px; }
  .cb { width: 14px; height: 14px; background: #d2d2d2; margin-left: auto; margin-right: 7px; box-shadow: 0 0 0 1px #3a3a3a; }
  .sn { flex: 1; height: 21px; display: flex; align-items: center; padding-left: 2px; }
  .sn.sel { background: #5f8ac1; }
  .vs { width: 20px; background: #f0f0f0; display: flex; flex-direction: column; }
  .vs i { height: 68px; width: 19px; background: #cdcdcd; }
  .bot { margin-top: auto; }
  .split { display: flex; height: 6px; align-items: center; margin: 9px 0 0 6px; gap: 3px; }
  .split i { width: 121px; height: 1px; background: #626262; }
  .split b { width: 14px; height: 3px; background: repeating-linear-gradient(90deg, #ccc 0 1px, transparent 1px 2px); }
  .scroll { display: flex; height: 341px; margin-top: 5px; overflow: hidden; }
  .rolls { width: 266px; margin-left: -1px; display: flex; flex-direction: column; gap: 5px; color: #f2f2f2; }
  .roll { background: #505050; border-radius: 3px; flex: none; box-shadow: 0 0 0 1px #414141; }
  .first { height: 83px; }
  .radios { margin-left: 25px; width: 211px; height: 25px; box-sizing: border-box; border: 1px solid #3b3b3b; border-top: 0; border-radius: 0 0 3px 3px; display: flex; align-items: center; padding: 0 0 8px 2px; }
  .rd { width: 14px; height: 14px; border-radius: 50%; background: #646464; margin-right: 8px; margin-top: -1px; }
  .rd.on { background: radial-gradient(circle, #e0e0e0 4px, #626262 5px); }
  .g1 { margin-left: 27px; } .g2 { margin-left: 18px; }
  .ps { margin: 9px 0 0 112px; }
  .head { height: 22px; display: flex; align-items: center; padding: 0 9px 0 7px; font-weight: 700; font-size: 12.5px; gap: 8px; }
  .big { height: 226px; }
  .dots { width: 8px; height: 8px; margin-left: auto; background: radial-gradient(circle, #aaa .7px, transparent 1px) 0 0 / 2.600px 2.600px; }
  .big .head + .pr { margin-top: 10px; }
  .pr { display: flex; margin: 8px 0 0 34px; gap: 8px; }
  .pg { display: flex; gap: 2px; }
  .pr .btn { height: 20px; box-shadow: 0 0 0 1px #494949; }
  .b196 { width: 196px; } .b74 { width: 74px; } .b94 { width: 94px; } .b176 { width: 176px; }
  .bx { width: 18px; }
  .bx i { width: 8px; height: 6px; border: 1px solid #0a0a0a; border-top-width: 3px; }
  .sbar { margin-left: 4px; width: 7px; background: #383838; border-radius: 3px; padding-top: 31px; box-sizing: border-box; }
  .sbar i { height: 72px; background: #585858; border-radius: 3px; }
  .time { height: 63px; flex: none; display: flex; }
  .time .vgrip { margin: 7px 4px 3px 2px; }
  .slider { display: flex; gap: 2px; padding: 5px 0 0 1px; height: 25px; }
  .slider .btn { height: 20px; line-height: 18px; }
  .ar { width: 18px; } .sl { width: 154px; font-size: 13px; }
  .sl .t { margin-right: 2px; }
  .tk { font-size: 13px; }
  .status { height: 67px; flex: none; display: flex; }
  .listener { margin: 4px 0 0 4px; width: 119px; height: 54px; border: 2px solid #eee; border-top-color: #888; border-left-color: #888; background: #fff; }
  .listener i { height: 25px; background: #dcc3c5; border-bottom: 2px solid #fff; box-shadow: 0 1px #777; }
  .listener div { margin: 3px 4px 0; height: 23px; overflow: hidden; white-space: nowrap; color: #808080; font: 13px/18px "Liberation Mono", monospace; letter-spacing: 1.250px; }
  .lsep { width: 2px; height: 62px; margin: 2px 0 0 3px; border: solid #1a1a1a; border-width: 0 1px 1px 0; }
  .sel1 { margin: 12px 0 0 4px; width: 678px; color: #f2f2f2; flex: none; }
  .coords { width: 543px; color: #f2f2f2; flex: none; padding-top: 9px; box-sizing: border-box; }
  .crow { display: flex; align-items: center; height: 21px; }
  .cl { margin-left: 8px; width: 18px; } .c2 { margin-left: 15px; width: 16px; }
  .cf { width: 71.500px; height: 21px; box-sizing: border-box; padding-left: 3px; line-height: 23px; background: #575757; color: #8a8a8a; }
  .grid { margin-left: 18px; }
  .tag { display: flex; align-items: center; gap: 6px; margin: 8px 0 0 376px; color: #ddd; }
  .playback { width: 161px; flex: none; padding-top: 7px; }
  .prow { display: flex; padding-top: 4px; }
  .sp { width: 87px; height: 20px; box-sizing: border-box; background: #646464; display: flex; align-items: center; justify-content: space-between; padding: 0 3px 0 5px; border-left: 1px solid #111; }
  .clk { margin-left: 8px; }
  .bigkey { width: 53px; height: 54px; margin-top: 6px; flex: none; }
  .two { margin: 6px 0 0 5px; display: flex; flex-direction: column; gap: 2px; }
  .two .btn { width: 58px; height: 25px; }
  .keyf { margin: 6px 0 0 5px; width: 143px; }
  .kd { height: 22px; }
  .kf { display: flex; margin-top: 6px; gap: 4px; }
  .kf .btn { width: 110px; height: 25px; }
  .navi { margin: 5px 0 0 13px; }
  .task { height: 50px; flex: none; display: flex; align-items: center; background: linear-gradient(90deg, #030303, #0b0d0b 30%, #050505 45%, #0c0e0c 62%, #040404 80%, #070807); font-family: "Open Sans", sans-serif; color: #fff; }
  .start { width: 60px; display: flex; justify-content: center; }
  .search { width: 430px; height: 50px; box-sizing: border-box; background: #333; display: flex; align-items: center; padding: 0 18px 0 11px; gap: 11px; color: #a3a3a3; font-size: 18px; line-height: 24px; }
  .apps { display: flex; width: 1158px; height: 50px; }
  .ap { width: 62px; height: 50px; box-sizing: border-box; display: flex; align-items: center; justify-content: center; padding-left: 1px; }
  .active { background: linear-gradient(#8ce2e6, #8ce2e6) 0 100% / 100% 3px no-repeat, #3f4342; }
  .run { background: linear-gradient(#8ce2e6, #8ce2e6) 6px 100% / 51px 3px no-repeat; }
  .tray { margin-right: 10px; }
  .clock { width: 76px; display: flex; flex-direction: column; align-items: center; font-size: 14px; line-height: 23px; }
  .noti { margin: 10px 0 0 21px; }
  .desk { width: 1px; height: 50px; background: #666; margin-left: 13px; }
</style>
